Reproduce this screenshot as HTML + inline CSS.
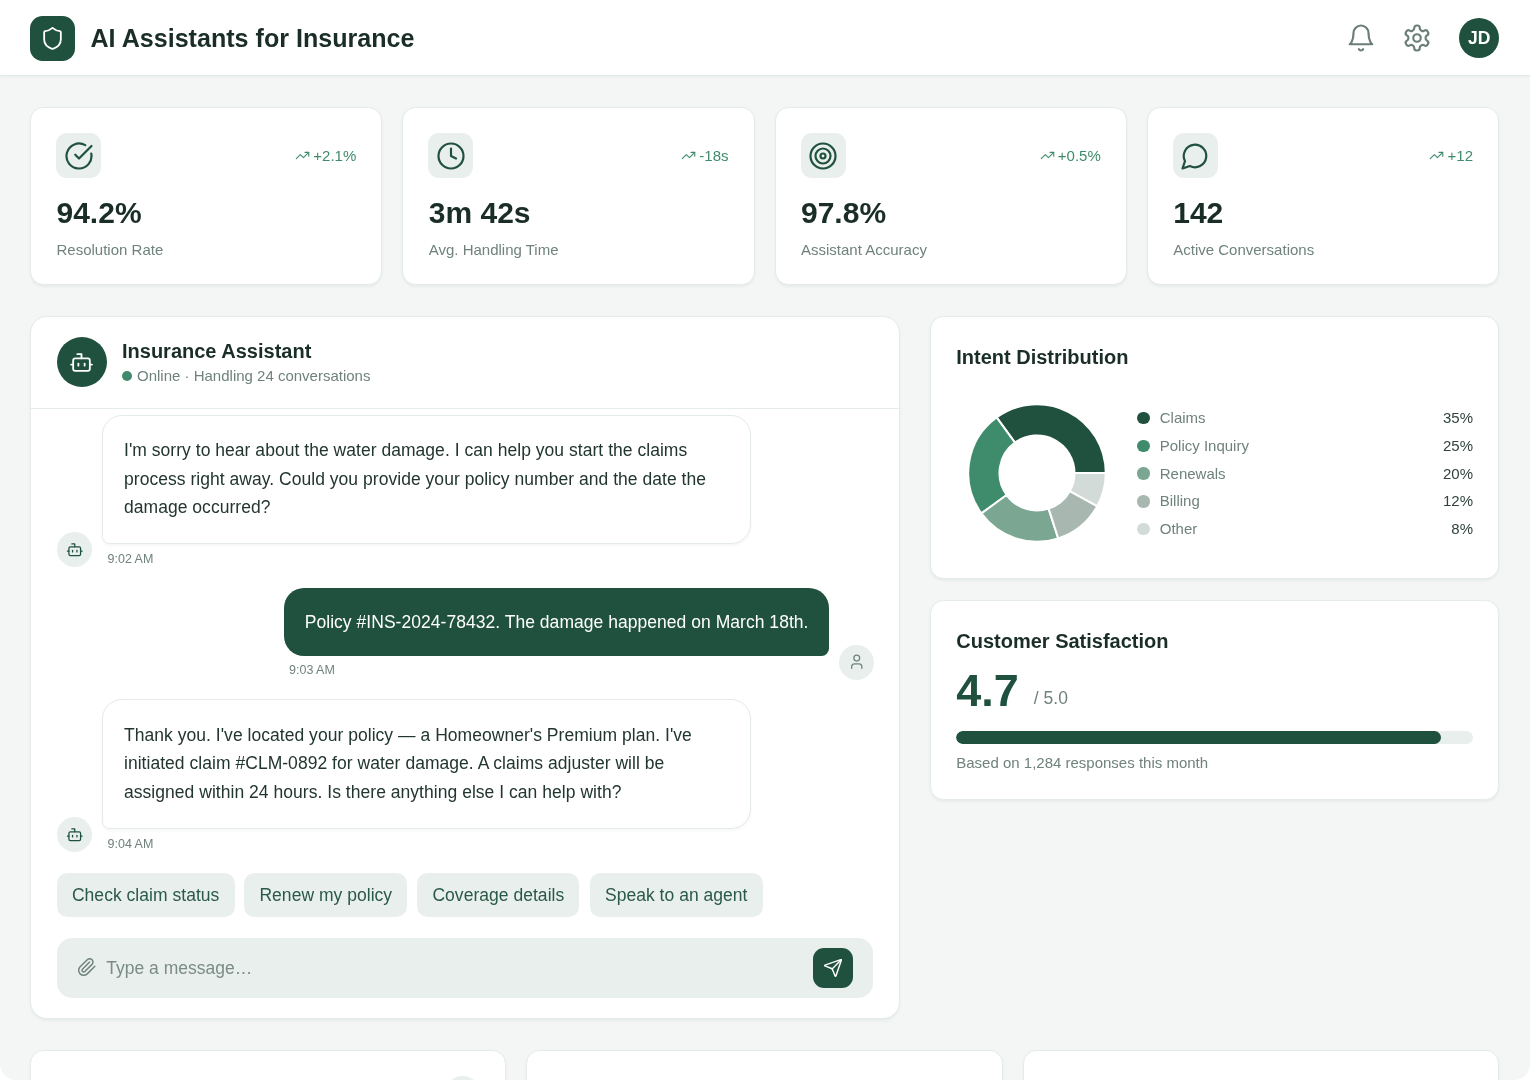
<!DOCTYPE html>
<html lang="en">
<head>
<meta charset="utf-8">
<title>AI Assistants for Insurance</title>
<style>
*{box-sizing:border-box;margin:0;padding:0}
html{background:#fff}
body{width:1530px;height:1080px;overflow:hidden;background:#fff;font-family:"Liberation Sans",Arial,sans-serif;color:#1a2e27;-webkit-font-smoothing:antialiased}
.app{position:relative;width:1530px;height:1080px;overflow:hidden;background:#f3f6f5;border-radius:16px;will-change:transform}
svg{display:block}
.ic{fill:none;stroke:currentColor;stroke-width:1.75;stroke-linecap:round;stroke-linejoin:round}

/* header */
.hdr{position:absolute;left:0;top:0;width:1530px;height:76px;background:#fff;border-bottom:1.25px solid #e4ebe8;box-shadow:0 1.25px 2.5px rgba(20,60,45,.05)}
.logo{position:absolute;left:30px;top:15.5px;width:45px;height:45.5px;border-radius:12.5px;background:#1f513e;color:#fff;display:flex;align-items:center;justify-content:center}
.ttl{position:absolute;left:90.5px;top:22.5px;font-size:25.1px;line-height:31px;font-weight:700;color:#1a2e27;white-space:nowrap}
.hic{position:absolute;top:23px;width:30px;height:30px;color:#6b7f78}
.av{position:absolute;left:1459.25px;top:18px;width:40px;height:40px;border-radius:50%;background:#1f513e;color:#fff;font-weight:700;font-size:17.5px;line-height:40px;text-align:center}

/* cards */
.card{position:absolute;background:#fff;border:1.25px solid #e4ebe8;border-radius:13.5px;box-shadow:0 1.25px 2.5px rgba(20,60,45,.05)}
.stat{top:107.4px;width:352.25px;height:178px;padding:25px}
.stat .ib{width:45px;height:45px;border-radius:11px;background:#e9efed;color:#1f513e;display:flex;align-items:center;justify-content:center}
.stat .tr{position:absolute;right:25px;top:37.5px;height:20px;display:flex;align-items:center;color:#3f8c6c;font-size:15px;line-height:20px;white-space:nowrap}
.stat .tr svg{margin-right:3.25px;position:relative;top:-.25px}
.stat .val{position:relative;left:.5px;margin-top:15px;font-size:30px;line-height:40px;font-weight:700;color:#1a2e27}
.stat .lbl{position:relative;left:.5px;margin-top:6.5px;font-size:15px;line-height:20px;color:#6f827b}

.h3{font-size:20px;line-height:30px;font-weight:700;color:#1a2e27}

/* chat */
.chat{left:30px;top:316.25px;width:870.25px;height:702.25px;border-radius:17px}
.chd{position:absolute;left:0;top:0;width:100%;height:91.25px;border-bottom:1.25px solid #e6ecea}
.cav{position:absolute;left:25.5px;top:20px;width:50px;height:50px;border-radius:50%;background:#1f513e;color:#fff;display:flex;align-items:center;justify-content:center}
.cnm{position:absolute;left:91px;top:18.75px;font-size:20px;line-height:30px;font-weight:700;color:#1a2e27;white-space:nowrap}
.cst{position:absolute;left:90.5px;top:49px;font-size:15px;line-height:20px;color:#6f827b;white-space:nowrap;display:flex;align-items:center}
.cst i{display:block;width:10px;height:10px;border-radius:50%;background:#3f8c6c;margin-right:5.5px}
.mav{position:absolute;width:35px;height:35px;border-radius:50%;background:#e9efed;color:#1f513e;display:flex;align-items:center;justify-content:center}
.bub{position:absolute;font-size:17.5px;line-height:28.65px;letter-spacing:.035px;white-space:nowrap}
.bub.a{left:71.25px;width:649px;height:129.5px;padding:20.25px 20.75px;background:#fff;border:1.25px solid #e4ebe8;border-radius:20px 20px 20px 7.5px;color:#22362f;box-shadow:0 1.25px 2.5px rgba(20,60,45,.04)}
.bub.u{left:253px;width:544.75px;height:68px;padding:19.75px 20.75px;background:#1f513e;color:#fff;border-radius:20px 20px 7.5px 20px}
.tm{position:absolute;font-size:12.5px;line-height:18.75px;color:#6f827b;white-space:nowrap}
.chip{position:absolute;top:555.25px;height:44.5px;padding:0 15.2px;border-radius:10.5px;background:#e9efed;color:#2a5a47;font-size:17.5px;line-height:45px;letter-spacing:.03px;white-space:nowrap}
.inp{position:absolute;left:25.5px;top:620.25px;width:816.5px;height:60px;border-radius:15px;background:#e9efed}
.inp .clip{position:absolute;left:20px;top:19.25px;color:#6f827b}
.inp .ph{position:absolute;left:49.75px;top:17.25px;font-size:17.5px;line-height:26px;color:#7a8c85;white-space:nowrap}
.inp .snd{position:absolute;right:20.25px;top:10.25px;width:40px;height:40px;border-radius:11px;background:#1f513e;color:#fff;display:flex;align-items:center;justify-content:center}

/* right */
.intent{left:930.25px;top:316.25px;width:568.75px;height:262.5px;padding:25px}
.donut{position:absolute;left:25.5px;top:75.75px;width:160px;height:160px}
.lg{position:absolute;left:206px;top:90.75px;width:335.75px}
.lg .r{display:flex;align-items:center;height:20px;margin-bottom:7.75px;font-size:15px;line-height:20px;color:#6f827b;white-space:nowrap}
.lg .r i{display:block;width:12.5px;height:12.5px;border-radius:50%;margin-right:10px;flex:none}
.lg .r b{margin-left:auto;font-weight:400;color:#2f433c}
.csat{left:930.25px;top:599.75px;width:568.75px;height:200.5px;padding:25px}
.csat .sc{margin-top:10px;height:50px;display:flex;align-items:baseline;white-space:nowrap}
.csat .sc .n{font-size:45px;line-height:50px;font-weight:700;color:#1f513e}
.csat .sc .d{margin-left:15px;font-size:17.5px;color:#6f827b;position:relative;top:-1.75px}
.csat .bar{margin-top:15.5px;height:13px;border-radius:7px;background:#e9efed;overflow:hidden}
.csat .bar i{display:block;width:93.85%;height:100%;border-radius:7px;background:#1f513e}
.csat .nt{margin-top:9px;font-size:15px;line-height:20px;color:#6f827b}
.bt{top:1050px;height:120px}
.bt .q{position:absolute;right:25px;top:25px;width:35px;height:35px;border-radius:50%;background:#e9efed}
</style>
</head>
<body>
<div class="app">

<!-- HEADER -->
<div class="hdr">
  <div class="logo"><svg class="ic" width="25" height="25" viewBox="0 0 24 24"><path d="M20 13c0 5-3.5 7.5-7.66 8.950a1 1 0 0 1-.67-.01C7.5 20.500 4 18 4 13V6a1 1 0 0 1 1-1c2 0 4.500-1.200 6.240-2.720a1.170 1.170 0 0 1 1.520 0C14.510 3.810 17 5 19 5a1 1 0 0 1 1 1z"/></svg></div>
  <div class="ttl">AI Assistants for Insurance</div>
  <svg class="ic hic" style="left:1345.5px" viewBox="0 0 24 24"><path d="M6 8a6 6 0 0 1 12 0c0 7 3 9 3 9H3s3-2 3-9"/><path d="M10.3 21a1.940 1.940 0 0 0 3.400 0"/></svg>
  <svg class="ic hic" style="left:1401.5px" viewBox="0 0 24 24"><path d="M12.22 2h-.44a2 2 0 0 0-2 2v.18a2 2 0 0 1-1 1.73l-.43.25a2 2 0 0 1-2 0l-.15-.08a2 2 0 0 0-2.73.73l-.22.38a2 2 0 0 0 .73 2.73l.15.1a2 2 0 0 1 1 1.720v.51a2 2 0 0 1-1 1.740l-.15.09a2 2 0 0 0-.73 2.730l.22.38a2 2 0 0 0 2.730.73l.15-.08a2 2 0 0 1 2 0l.43.25a2 2 0 0 1 1 1.730V20a2 2 0 0 0 2 2h.44a2 2 0 0 0 2-2v-.18a2 2 0 0 1 1-1.730l.43-.25a2 2 0 0 1 2 0l.15.08a2 2 0 0 0 2.730-.73l.22-.39a2 2 0 0 0-.73-2.730l-.15-.08a2 2 0 0 1-1-1.740v-.5a2 2 0 0 1 1-1.740l.15-.09a2 2 0 0 0 .73-2.730l-.22-.38a2 2 0 0 0-2.730-.73l-.15.08a2 2 0 0 1-2 0l-.43-.25a2 2 0 0 1-1-1.730V4a2 2 0 0 0-2-2z"/><circle cx="12" cy="12" r="3"/></svg>
  <div class="av">JD</div>
</div>

<!-- STATS -->
<div class="card stat" style="left:30px">
  <div class="ib"><svg class="ic" width="30" height="30" viewBox="0 0 24 24"><path d="M21.801 10A10 10 0 1 1 17 3.335"/><path d="m9 11 3 3L22 4"/></svg></div>
  <div class="tr"><svg class="ic" width="15" height="15" viewBox="0 0 24 24"><polyline points="22 7 13.5 15.5 8.5 10.5 2 17"/><polyline points="16 7 22 7 22 13"/></svg>+2.1%</div>
  <div class="val">94.2%</div>
  <div class="lbl">Resolution Rate</div>
</div>
<div class="card stat" style="left:402.25px">
  <div class="ib"><svg class="ic" width="30" height="30" viewBox="0 0 24 24"><circle cx="12" cy="12" r="10"/><polyline points="12 6 12 12 16 14"/></svg></div>
  <div class="tr"><svg class="ic" width="15" height="15" viewBox="0 0 24 24"><polyline points="22 7 13.5 15.5 8.5 10.5 2 17"/><polyline points="16 7 22 7 22 13"/></svg>-18s</div>
  <div class="val">3m 42s</div>
  <div class="lbl">Avg. Handling Time</div>
</div>
<div class="card stat" style="left:774.5px">
  <div class="ib"><svg class="ic" width="30" height="30" viewBox="0 0 24 24"><circle cx="12" cy="12" r="10"/><circle cx="12" cy="12" r="6"/><circle cx="12" cy="12" r="2"/></svg></div>
  <div class="tr"><svg class="ic" width="15" height="15" viewBox="0 0 24 24"><polyline points="22 7 13.5 15.5 8.5 10.5 2 17"/><polyline points="16 7 22 7 22 13"/></svg>+0.5%</div>
  <div class="val">97.8%</div>
  <div class="lbl">Assistant Accuracy</div>
</div>
<div class="card stat" style="left:1146.75px">
  <div class="ib"><svg class="ic" width="30" height="30" viewBox="0 0 24 24"><path d="M7.9 20A9 9 0 1 0 4 16.1L2 22Z"/></svg></div>
  <div class="tr"><svg class="ic" width="15" height="15" viewBox="0 0 24 24"><polyline points="22 7 13.5 15.5 8.5 10.5 2 17"/><polyline points="16 7 22 7 22 13"/></svg>+12</div>
  <div class="val">142</div>
  <div class="lbl">Active Conversations</div>
</div>

<div class="card chat">
  <div class="chd">
    <div class="cav"><svg class="ic" width="25" height="25" viewBox="0 0 24 24"><path d="M12 8V4H8"/><rect width="16" height="12" x="4" y="8" rx="2"/><path d="M2 14h2"/><path d="M20 14h2"/><path d="M15 13v2"/><path d="M9 13v2"/></svg></div>
    <div class="cnm">Insurance Assistant</div>
    <div class="cst"><i></i>Online · Handling 24 conversations</div>
  </div>

  <div class="bub a" style="top:97.5px">I'm sorry to hear about the water damage. I can help you start the claims<br>process right away. Could you provide your policy number and the date the<br>damage occurred?</div>
  <div class="mav" style="left:25.75px;top:215px"><svg class="ic" width="17.5" height="17.5" viewBox="0 0 24 24"><path d="M12 8V4H8"/><rect width="16" height="12" x="4" y="8" rx="2"/><path d="M2 14h2"/><path d="M20 14h2"/><path d="M15 13v2"/><path d="M9 13v2"/></svg></div>
  <div class="tm" style="left:76.5px;top:232.75px">9:02 AM</div>

  <div class="bub u" style="top:270.5px">Policy #INS-2024-78432. The damage happened on March 18th.</div>
  <div class="mav" style="left:808px;top:327.25px;color:#6f827b"><svg class="ic" width="17.5" height="17.5" viewBox="0 0 24 24"><path d="M19 21v-2a4 4 0 0 0-4-4H9a4 4 0 0 0-4 4v2"/><circle cx="12" cy="7" r="4"/></svg></div>
  <div class="tm" style="left:258px;top:344px">9:03 AM</div>

  <div class="bub a" style="top:382px">Thank you. I've located your policy — a Homeowner's Premium plan. I've<br>initiated claim #CLM-0892 for water damage. A claims adjuster will be<br>assigned within 24 hours. Is there anything else I can help with?</div>
  <div class="mav" style="left:25.75px;top:500px"><svg class="ic" width="17.5" height="17.5" viewBox="0 0 24 24"><path d="M12 8V4H8"/><rect width="16" height="12" x="4" y="8" rx="2"/><path d="M2 14h2"/><path d="M20 14h2"/><path d="M15 13v2"/><path d="M9 13v2"/></svg></div>
  <div class="tm" style="left:76.5px;top:517.5px">9:04 AM</div>

  <div class="chip" style="left:25.75px">Check claim status</div>
  <div class="chip" style="left:213.25px">Renew my policy</div>
  <div class="chip" style="left:386.25px">Coverage details</div>
  <div class="chip" style="left:558.75px">Speak to an agent</div>

  <div class="inp">
    <svg class="ic clip" width="20" height="20" viewBox="0 0 24 24"><path d="m21.44 11.05-9.19 9.19a6 6 0 0 1-8.49-8.49l8.57-8.57A4 4 0 1 1 18 8.84l-8.59 8.57a2 2 0 0 1-2.83-2.83l8.49-8.48"/></svg>
    <div class="ph">Type a message…</div>
    <div class="snd"><svg class="ic" width="20" height="20" viewBox="0 0 24 24"><path d="M14.536 21.686a.5.5 0 0 0 .937-.024l6.5-19a.496.496 0 0 0-.635-.635l-19 6.5a.5.5 0 0 0-.024.937l7.93 3.18a2 2 0 0 1 1.112 1.11z"/><path d="m21.854 2.147-10.94 10.939"/></svg></div>
  </div>
</div>

<div class="card intent">
  <div class="h3">Intent Distribution</div>
  <svg class="donut" viewBox="0 0 160 160" stroke="#fff" stroke-width="2" stroke-linejoin="round">
<path d="M148.75 80.00A68.75 68.75 0 0 0 39.59 24.38L57.96 49.66A37.5 37.5 0 0 1 117.50 80.00Z" fill="#1f513e"/>
<path d="M39.59 24.38A68.75 68.75 0 0 0 24.38 120.41L49.66 102.04A37.5 37.5 0 0 1 57.96 49.66Z" fill="#3f8c6c"/>
<path d="M24.38 120.41A68.75 68.75 0 0 0 101.24 145.39L91.59 115.66A37.5 37.5 0 0 1 49.66 102.04Z" fill="#7aa692"/>
<path d="M101.24 145.39A68.75 68.75 0 0 0 140.25 113.12L112.86 98.07A37.5 37.5 0 0 1 91.59 115.66Z" fill="#a8b8b1"/>
<path d="M140.25 113.12A68.75 68.75 0 0 0 148.75 80.00L117.50 80.00A37.5 37.5 0 0 1 112.86 98.07Z" fill="#d3dbd8"/>
  </svg>
  <div class="lg">
    <div class="r"><i style="background:#1f513e"></i>Claims<b>35%</b></div>
    <div class="r"><i style="background:#3f8c6c"></i>Policy Inquiry<b>25%</b></div>
    <div class="r"><i style="background:#7aa692"></i>Renewals<b>20%</b></div>
    <div class="r"><i style="background:#a8b8b1"></i>Billing<b>12%</b></div>
    <div class="r"><i style="background:#d3dbd8"></i>Other<b>8%</b></div>
  </div>
</div>
<div class="card csat">
  <div class="h3">Customer Satisfaction</div>
  <div class="sc"><span class="n">4.7</span><span class="d">/ 5.0</span></div>
  <div class="bar"><i></i></div>
  <div class="nt">Based on 1,284 responses this month</div>
</div>

<div class="card bt" style="left:30px;width:476.33px"><div class="q"></div></div>
<div class="card bt" style="left:526.33px;width:476.33px"></div>
<div class="card bt" style="left:1022.67px;width:476.33px"></div>


</div>
</body>
</html>
